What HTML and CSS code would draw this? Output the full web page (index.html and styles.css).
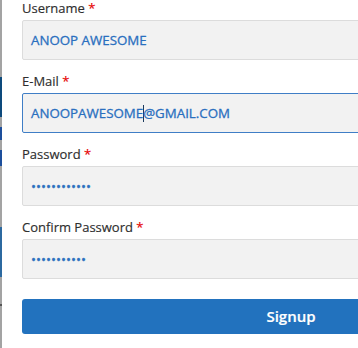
FILE: index.html
```html
<!DOCTYPE html>
<html>
<head>
<meta charset="utf-8">
<link rel="stylesheet" href="styles.css">
</head>
<body>
<div class="page">
  <div class="edge">
    <div class="seg gray" style="height:77px"></div>
    <div class="seg navy" style="height:40px"></div>
    <div class="seg gray" style="height:10px"></div>
    <div class="seg blue" style="height:13px"></div>
    <div class="seg gray" style="height:10px"></div>
    <div class="seg blue" style="height:16px"></div>
    <div class="seg gray" style="height:61px"></div>
    <div class="seg steel" style="height:50px"></div>
    <div class="seg gray" style="height:27px"></div>
    <div class="seg dark" style="height:2px"></div>
    <div class="seg gray fill"></div>
  </div>
  <form class="form">
    <div class="field">
      <div class="label">Username <span class="req">*</span></div>
      <div class="input">ANOOP AWESOME</div>
    </div>
    <div class="field">
      <div class="label">E-Mail <span class="req">*</span></div>
      <div class="input focus">ANOOPAWESOME<span class="caret"></span>@GMAIL.COM</div>
    </div>
    <div class="field">
      <div class="label">Password <span class="req">*</span></div>
      <div class="input dots">••••••••••••</div>
    </div>
    <div class="field">
      <div class="label">Confirm Password <span class="req">*</span></div>
      <div class="input dots">•••••••••••</div>
    </div>
    <div class="button">Signup</div>
  </form>
</div>
</body>
</html>
```
FILE: styles.css
```css
html, body {
  margin: 0;
  padding: 0;
  background: #fff;
  overflow: hidden;
}
body {
  font-family: "Open Sans", "Liberation Sans", sans-serif;
}
.page {
  display: flex;
  height: 348px;
}
.edge {
  width: 2px;
  flex-shrink: 0;
  display: flex;
  flex-direction: column;
}
.seg { width: 2px; }
.gray { background: #a3a3a3; }
.navy { background: #0d4a7c; }
.blue { background: #1d4f9c; }
.steel { background: #2c69a0; }
.dark { background: #555; }
.fill { flex: 1; }
.form {
  margin: 0;
  padding-left: 20px;
  width: 538px;
  flex-shrink: 0;
  display: flex;
  flex-direction: column;
}
.field {
  display: flex;
  flex-direction: column;
  margin-bottom: 13px;
}
.label {
  font-size: 13px;
  line-height: 16px;
  color: #2e2e2e;
  margin-bottom: 4px;
  -webkit-text-stroke: 0.15px #2e2e2e;
}
.req { color: #e60000; -webkit-text-stroke: 0.15px #e60000; }
.input {
  box-sizing: border-box;
  height: 40px;
  border: 1px solid #dcdcdc;
  border-radius: 2px;
  background: #f2f2f2;
  padding: 0 8px;
  font-size: 13.3px;
  line-height: 38px;
  color: #2a6fbf;
  -webkit-text-stroke: 0.3px #2a6fbf;
  white-space: nowrap;
}
.input.focus {
  border-color: #3f7ec6;
}
.caret {
  display: inline-block;
  width: 1px;
  height: 17px;
  background: #1c3a5e;
  vertical-align: -4px;
  margin-right: -1px;
}
.button {
  margin-top: 7px;
  height: 35px;
  border-radius: 3px;
  background: #2272be;
  color: #fff;
  font-weight: 600;
  font-size: 15px;
  line-height: 35px;
  text-align: center;
  -webkit-text-stroke: 0.2px #fff;
}
```
